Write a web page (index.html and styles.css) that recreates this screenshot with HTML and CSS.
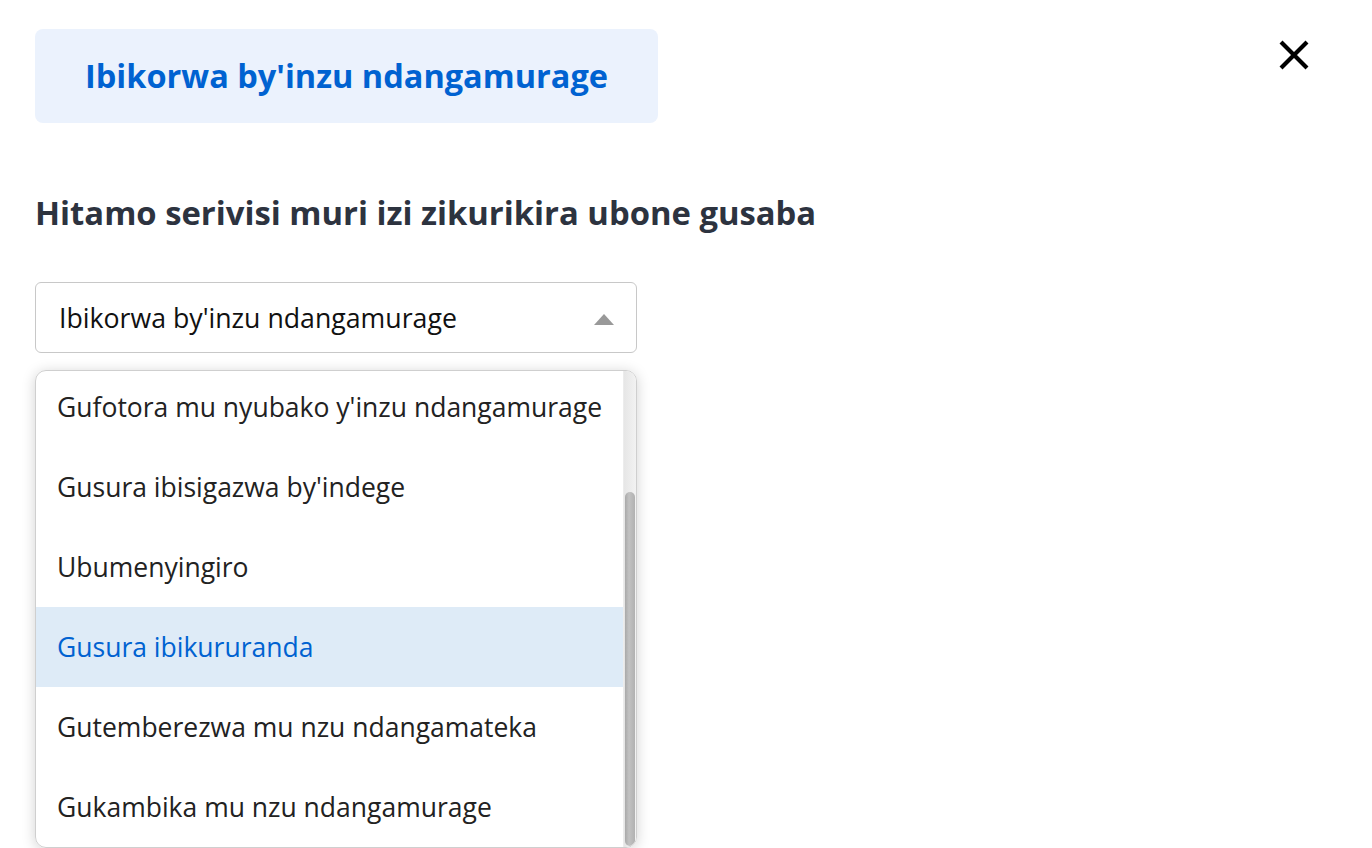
FILE: index.html
```html
<!DOCTYPE html>
<html lang="en">
<head>
    <meta charset="UTF-8">
    <meta name="viewport" content="width=device-width, initial-scale=1.0">
    <title>Serivisi</title>
    <link rel="stylesheet" href="styles.css">
</head>
<body>
<div class="page">
    <div class="top">
        <div class="tab">Ibikorwa by'inzu ndangamurage</div>
        <button class="close" type="button" aria-label="Close">
            <svg width="30" height="30" viewBox="0 0 30 30">
                <path d="M3.5 3.5 L26.5 26.5 M26.5 3.5 L3.5 26.5" stroke="#000" stroke-width="4.2" stroke-linecap="square"/>
            </svg>
        </button>
    </div>

    <h2 class="title">Hitamo serivisi muri izi zikurikira ubone gusaba</h2>

    <div class="select">
        <span>Ibikorwa by'inzu ndangamurage</span>
        <span class="arrow"></span>
    </div>

    <div class="dropdown">
        <ul class="options">
            <li>Gufotora mu nyubako y'inzu ndangamurage</li>
            <li>Gusura ibisigazwa by'indege</li>
            <li>Ubumenyingiro</li>
            <li class="active">Gusura ibikururanda</li>
            <li>Gutemberezwa mu nzu ndangamateka</li>
            <li>Gukambika mu nzu ndangamurage</li>
        </ul>
        <div class="scrollbar"><div class="thumb"></div></div>
    </div>
</div>
</body>
</html>
```

FILE: styles.css
```css
* {
    margin: 0;
    padding: 0;
    box-sizing: border-box;
}

body {
    font-family: "Open Sans", Lato, sans-serif;
    background: #fff;
    color: #222;
}

.page {
    padding: 29px 35px 0 35px;
    height: 848px;
    overflow: hidden;
}

.top {
    display: flex;
    justify-content: space-between;
    align-items: flex-start;
}

.tab {
    width: 623px;
    height: 94px;
    background-color: #ebf2fd;
    border-radius: 8px;
    color: #0062d1;
    font-size: 32.5px;
    font-weight: 700;
    display: flex;
    align-items: center;
    justify-content: center;
    padding-bottom: 2px;
}

.close {
    border: none;
    background: none;
    margin-top: 11px;
    margin-right: 28px;
}

.title {
    margin-top: 68px;
    font-size: 32.8px;
    line-height: 44px;
    font-weight: 700;
    color: #2d333f;
}

.select {
    margin-top: 47px;
    width: 602px;
    height: 71px;
    border: 1px solid #c8c8c8;
    border-radius: 6px;
    display: flex;
    align-items: center;
    justify-content: space-between;
    padding: 0 22px 0 23px;
    font-size: 26.7px;
    color: #111;
}

.arrow {
    width: 0;
    height: 0;
    border-left: 10px solid transparent;
    border-right: 10px solid transparent;
    border-bottom: 11px solid #999;
    margin-top: 4px;
}

.dropdown {
    margin-top: 17px;
    width: 602px;
    height: 478px;
    border: 1px solid #cfcfcf;
    border-radius: 11px;
    box-shadow: 0 2px 14px rgba(0, 0, 0, 0.18);
    overflow: hidden;
    position: relative;
    display: flex;
}

.options {
    list-style: none;
    flex: 1;
    display: flex;
    flex-direction: column;
    justify-content: flex-end;
    overflow: hidden;
}

.options li {
    flex: none;
    height: 80px;
    line-height: 80px;
    padding-left: 21px;
    font-size: 26.5px;
    color: #222;
    white-space: nowrap;
}

.options li.active {
    background-color: #deebf7;
    color: #0062d1;
}

.scrollbar {
    width: 13px;
    background: linear-gradient(to right, #e6e6e6, #f2f2f2);
    border-left: 1px solid #ececec;
    display: flex;
    flex-direction: column;
    justify-content: flex-end;
}

.thumb {
    height: 354px;
    margin: 0 1px 1px 1px;
    border-radius: 6px;
    background: linear-gradient(to right, #a9a9a9, #c2c2c2 40%, #b1b1b1);
}
```
